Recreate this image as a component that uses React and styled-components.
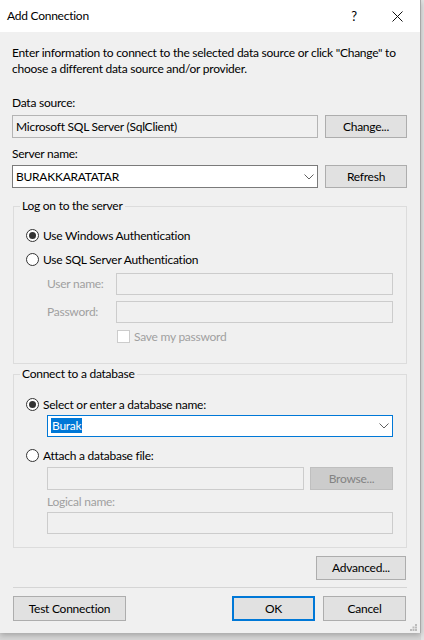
import React from "react";
import styled, { createGlobalStyle } from "styled-components";

const GlobalStyle = createGlobalStyle`
  html, body {
    margin: 0;
    padding: 0;
    background: #d6d6d6;
  }
  body {
    font-family: Lato, "Noto Sans", sans-serif;
    font-size: 12px;
    letter-spacing: -0.25px;
    color: #000;
  }
`;

const Page = styled.div`
  width: 424px;
  height: 640px;
  background: linear-gradient(to right, transparent 421px, #e4e4e4 421px);
  overflow: hidden;
`;

const Dialog = styled.div`
  width: 421px;
  height: 633px;
  background: #f0f0f0;
  border-right: 1px solid #a8a8a8;
  box-sizing: border-box;
  display: flex;
  flex-direction: column;
  box-shadow: 0 2px 6px rgba(0, 0, 0, 0.25);
`;

const TitleBar = styled.div`
  height: 32px;
  background: #fff;
  display: flex;
  align-items: center;
  padding-left: 7px;
  flex-shrink: 0;
`;

const Title = styled.div`
  flex: 1;
  line-height: 16px;
`;

const TitleButton = styled.div`
  width: ${(p) => p.w}px;
  height: 32px;
  display: flex;
  align-items: center;
  justify-content: center;
  font-size: 13px;
`;

const Body = styled.div`
  flex: 1;
  padding: 13px 13px 0 12px;
  display: flex;
  flex-direction: column;
`;

const Text = styled.div`
  line-height: 16px;
  white-space: nowrap;
  margin-top: ${(p) => p.mt || 0}px;
  color: ${(p) => (p.disabled ? "#a0a0a0" : "#000")};
`;

const Row = styled.div`
  display: flex;
  gap: ${(p) => p.gap || 7}px;
  margin-top: ${(p) => p.mt || 0}px;
`;

const Box = styled.div`
  flex: 1;
  height: ${(p) => p.h || 23}px;
  box-sizing: border-box;
  border: 1px solid ${(p) => (p.focused ? "#0078d7" : p.disabled ? "#cccccc" : p.readOnly ? "#b4b4b4" : "#7a7a7a")};
  background: ${(p) => (p.disabled || p.readOnly ? "#f0f0f0" : "#fff")};
  display: flex;
  align-items: center;
  padding: 0 3px;
  line-height: 16px;
  white-space: nowrap;
`;

const BoxText = styled.span`
  flex: 1;
`;

const Selected = styled.span`
  background: #0078d7;
  color: #fff;
  padding: 0 1px;
`;

const Button = styled.div`
  width: ${(p) => p.w}px;
  height: ${(p) => p.h || 23}px;
  box-sizing: border-box;
  flex-shrink: 0;
  border: 1px solid ${(p) => (p.primary ? "#0078d7" : p.disabled ? "#bfbfbf" : "#adadad")};
  box-shadow: ${(p) => (p.primary ? "inset 0 0 0 1px #0078d7" : "none")};
  background: ${(p) => (p.disabled ? "#cccccc" : "#e1e1e1")};
  color: ${(p) => (p.disabled ? "#838383" : "#000")};
  display: flex;
  align-items: center;
  justify-content: center;
  line-height: 16px;
`;

const Group = styled.fieldset`
  margin: ${(p) => p.mt}px 0 0 1px;
  padding: 0 13px ${(p) => p.pb}px 12px;
  border: 1px solid #dcdcdc;
  min-width: 0;
`;

const Legend = styled.legend`
  margin-left: -6px;
  padding: 0 2px;
  line-height: 16px;
`;

const RadioRow = styled.div`
  display: flex;
  align-items: center;
  gap: 4px;
  height: 16px;
  margin-top: ${(p) => p.mt}px;
`;

const RadioCircle = styled.span`
  width: 13px;
  height: 13px;
  box-sizing: border-box;
  border-radius: 50%;
  border: 1px solid #333;
  background: #fff;
  display: flex;
  align-items: center;
  justify-content: center;
  &::after {
    content: "";
    width: 7px;
    height: 7px;
    border-radius: 50%;
    background: ${(p) => (p.checked ? "#333" : "transparent")};
  }
`;

const Indent = styled.div`
  padding-left: 21px;
`;

const Credentials = styled.div`
  display: grid;
  grid-template-columns: 69px 1fr;
  row-gap: 6px;
  align-items: center;
  margin-top: 6px;
  padding-left: 21px;
`;

const CheckRow = styled.div`
  grid-column: 2;
  display: flex;
  align-items: center;
  gap: 4px;
  height: 16px;
  margin-top: -1px;
  color: #a0a0a0;
`;

const CheckBox = styled.span`
  width: 13px;
  height: 13px;
  box-sizing: border-box;
  border: 1px solid #cccccc;
  background: #fff;
  margin-left: 1px;
`;

const RightAligned = styled.div`
  display: flex;
  justify-content: flex-end;
  margin-top: ${(p) => p.mt}px;
  padding-right: 1px;
`;

const Separator = styled.div`
  height: 1px;
  background: #d5d5d5;
  margin: 7px 0 0 1px;
`;

const Footer = styled.div`
  display: flex;
  gap: 8px;
  margin-top: 8px;
  padding: 0 1px;
`;

const Spacer = styled.div`
  flex: 1;
`;

const Grip = styled.svg`
  align-self: flex-end;
  margin: 0 3px 2px 0;
  flex-shrink: 0;
`;

const Chevron = () => (
  <svg width="10" height="6" viewBox="0 0 10 6">
    <path d="M0.5 0.5 L5 5 L9.5 0.5" fill="none" stroke="#606060" strokeWidth="1" />
  </svg>
);

const App = () => {
  return (
    <Page>
      <GlobalStyle />
      <Dialog>
        <TitleBar>
          <Title>Add Connection</Title>
          <TitleButton w={40}>?</TitleButton>
          <TitleButton w={46}>
            <svg width="11" height="11" viewBox="0 0 11 11">
              <path d="M0.5 0.5 L10.5 10.5 M10.5 0.5 L0.5 10.5" stroke="#111" strokeWidth="1" />
            </svg>
          </TitleButton>
        </TitleBar>
        <Body>
          <Text>
            Enter information to connect to the selected data source or click "Change" to
            <br />
            choose a different data source and/or provider.
          </Text>
          <Text mt={18}>Data source:</Text>
          <Row mt={4}>
            <Box readOnly>Microsoft SQL Server (SqlClient)</Box>
            <Button w={82}>Change...</Button>
          </Row>
          <Text mt={8}>Server name:</Text>
          <Row mt={3}>
            <Box>
              <BoxText>BURAKKARATATAR</BoxText>
              <Chevron />
            </Box>
            <Button w={82}>Refresh</Button>
          </Row>

          <Group mt={10} pb={19}>
            <Legend>Log on to the server</Legend>
            <RadioRow mt={13}>
              <RadioCircle checked />
              Use Windows Authentication
            </RadioRow>
            <RadioRow mt={8}>
              <RadioCircle />
              Use SQL Server Authentication
            </RadioRow>
            <Credentials>
              <Text disabled>User name:</Text>
              <Box disabled h={22} />
              <Text disabled>Password:</Text>
              <Box disabled h={22} />
              <CheckRow>
                <CheckBox />
                Save my password
              </CheckRow>
            </Credentials>
          </Group>

          <Group mt={2} pb={13}>
            <Legend>Connect to a database</Legend>
            <RadioRow mt={14}>
              <RadioCircle checked />
              Select or enter a database name:
            </RadioRow>
            <Indent>
              <Row mt={3}>
                <Box focused h={22}>
                  <BoxText>
                    <Selected>Burak</Selected>
                  </BoxText>
                  <Chevron />
                </Box>
              </Row>
            </Indent>
            <RadioRow mt={10}>
              <RadioCircle />
              Attach a database file:
            </RadioRow>
            <Indent>
              <Row mt={4} gap={6}>
                <Box disabled />
                <Button w={83} disabled>
                  Browse...
                </Button>
              </Row>
              <Text disabled mt={4}>
                Logical name:
              </Text>
              <Row mt={2}>
                <Box disabled h={22} />
              </Row>
            </Indent>
          </Group>

          <RightAligned mt={8}>
            <Button w={90} h={24}>
              Advanced...
            </Button>
          </RightAligned>
          <Separator />
          <Footer>
            <Button w={113} h={25}>
              Test Connection
            </Button>
            <Spacer />
            <Button w={83} h={25} primary>
              OK
            </Button>
            <Button w={83} h={25}>
              Cancel
            </Button>
          </Footer>
        </Body>
        <Grip width="7" height="7" viewBox="0 0 7 7">
          <rect x="5" y="0" width="2" height="2" fill="#bcbcbc" />
          <rect x="2.5" y="2.5" width="2" height="2" fill="#bcbcbc" />
          <rect x="5" y="2.5" width="2" height="2" fill="#bcbcbc" />
          <rect x="0" y="5" width="2" height="2" fill="#bcbcbc" />
          <rect x="2.5" y="5" width="2" height="2" fill="#bcbcbc" />
          <rect x="5" y="5" width="2" height="2" fill="#bcbcbc" />
        </Grip>
      </Dialog>
    </Page>
  );
};

export default App;
